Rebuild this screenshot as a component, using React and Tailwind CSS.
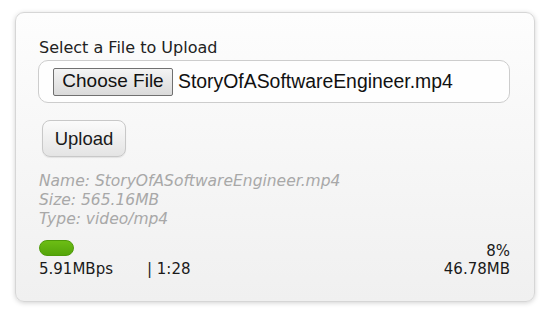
import React from "react";

export default function App() {
  const verdana = { fontFamily: '"DejaVu Sans", Verdana, sans-serif' };
  const arial = { fontFamily: '"Liberation Sans", Arial, sans-serif' };
  return (
    <div className="w-[550px] h-[317px] bg-white overflow-hidden pt-[12px] pl-[15px]">
      <div
        className="w-[520px] h-[290px] rounded-[9px] border border-[#d6d6d6] bg-gradient-to-b from-[#fdfdfd] to-[#f0f0f0] shadow-[0_1px_5px_rgba(0,0,0,0.18)] pl-[22px] pr-[24px] pt-[25px] text-[#222]"
        style={verdana}
      >
        <div className="text-[16px] leading-[19px] pl-[1px]">Select a File to Upload</div>
        <div className="mt-[3px] h-[43px] w-[472px] rounded-[10px] border border-[#cdcdcd] bg-[#fefefe] flex items-center pl-[14px]">
          <div
            className="h-[28px] w-[120px] flex items-center justify-center border border-[#707070] rounded-[2px] bg-gradient-to-b from-[#f4f4f4] to-[#dadada] text-[19px] text-[#111]"
            style={arial}
          >
            Choose File
          </div>
          <span className="ml-[5px] text-[19.4px] text-[#111]" style={arial}>
            StoryOfASoftwareEngineer.mp4
          </span>
        </div>
        <div
          className="mt-[17px] ml-[4px] h-[37px] w-[84px] flex items-center justify-center rounded-[8px] border border-[#c8c8c8] bg-gradient-to-b from-[#fbfbfb] to-[#e4e4e4] shadow-[0_1px_1px_rgba(0,0,0,0.08)] text-[18.5px] text-[#1a1a1a]"
          style={arial}
        >
          Upload
        </div>
        <div className="mt-[15px] pl-[1px] italic text-[15.5px] leading-[19px] text-[#a8a8a8]">
          <div>Name: StoryOfASoftwareEngineer.mp4</div>
          <div>Size: 565.16MB</div>
          <div>Type: video/mp4</div>
        </div>
        <div className="mt-[11px] flex justify-between text-[15px] leading-[18px] text-[#1a1a1a]">
          <div className="pl-[1px]">
            <div className="h-[16px] w-[35px] rounded-full border border-[#4f9b0a] bg-gradient-to-b from-[#6cbd14] to-[#55a50a]" />
            <div className="mt-[4px] flex">
              <span className="w-[108px]">5.91MBps</span>
              <span>| 1:28</span>
            </div>
          </div>
          <div className="pt-[2px] text-right">
            <div>8%</div>
            <div>46.78MB</div>
          </div>
        </div>
      </div>
    </div>
  );
}
